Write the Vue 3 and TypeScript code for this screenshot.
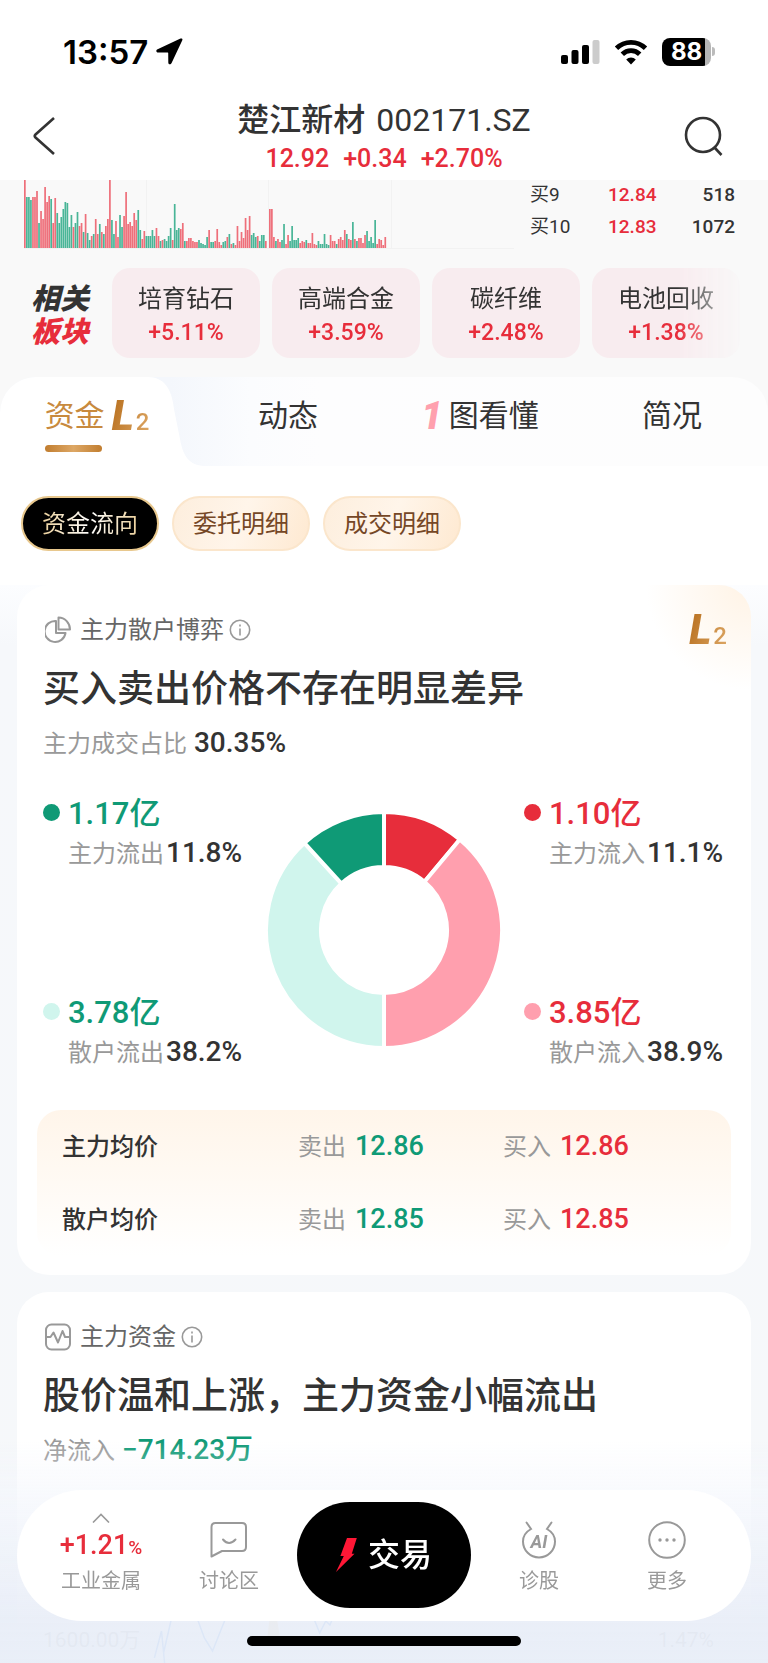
<script setup lang="ts">
interface Bar { x: number; h: number; up: boolean }

// Minute volumes: "r" rising, "g" falling, followed by the bar height.
const morning =
  'r68 g51 g51 g48 r51 r51 r57 g25 r37 r29 r61 r46 r52 g49 r25 r50 g35 g25 g31 g39 g46 g45 g21 g33 r21 g25 g36 r22 r25 g16 r34 g15 g8 r12 g14 r29 r14 g24 r16 g14 r22 r29 r68 g28 g14 r27 r11 g33 g21 r32 r56 r24 r26 r22 r35 r28 g38 g18 r9 r17 g12 g12 g12 g18 g12 r20 r12 g7 r8 g9 g7 g12 g20 r8 g44 g18 g20 r19 r25 g7 r7 r10 r10 r7 r6 r6 g8 g5 g4 g3 g11 r18 g6 g6 r7 r19 r6 r3 g6 g7 r11 g14 r4 g5 r3 r22 r7 r16 r10 r30 r18 r32 g13 g15 g11 r12 g7 g13 g13 r7'
const afternoon =
  'r39 r39 r11 g7 r9 r6 g8 g24 r4 r13 g7 g22 g8 g8 g10 r5 r7 r6 g8 r5 r5 r15 r4 r3 g7 g4 g4 g14 g4 g3 r13 r7 r7 g4 r9 r11 r8 r18 g14 r9 r8 g26 r9 g7 r10 r10 r5 r13 g17 g7 g11 g5 g28 r4 r9 r8 r3 r11'

const toBars = (src: string, start: number): Bar[] =>
  src.split(' ').map((t, i) => ({ x: start + i * 2.025, h: Number(t.slice(1)), up: t[0] === 'r' }))

const bars: Bar[] = [...toBars(morning, 0), ...toBars(afternoon, 245)]

const orders = [
  { label: '买9', price: '12.84', qty: '518' },
  { label: '买10', price: '12.83', qty: '1072' },
]

const sectors = [
  { name: '培育钻石', pct: '+5.11%' },
  { name: '高端合金', pct: '+3.59%' },
  { name: '碳纤维', pct: '+2.48%' },
  { name: '电池回收', pct: '+1.38%' },
]

const flows = [
  { amount: '1.17亿', label: '主力流出', pct: '11.8%', color: '#0f9a76', tone: 'down' },
  { amount: '1.10亿', label: '主力流入', pct: '11.1%', color: '#e72d3b', tone: 'up' },
  { amount: '3.78亿', label: '散户流出', pct: '38.2%', color: '#d0f5ed', tone: 'down' },
  { amount: '3.85亿', label: '散户流入', pct: '38.9%', color: '#ff9fae', tone: 'up' },
]

const ring = [
  { share: 11.1, color: '#e72d3b' },
  { share: 38.9, color: '#ff9fae' },
  { share: 38.2, color: '#d0f5ed' },
  { share: 11.8, color: '#0f9a76' },
]

const R = 118
const r = 63
const point = (radius: number, turn: number) => {
  const a = turn * 2 * Math.PI
  return `${(120 + radius * Math.sin(a)).toFixed(2)} ${(120 - radius * Math.cos(a)).toFixed(2)}`
}
let sum = 0
const slices = ring.map((s) => {
  const a = sum / 100
  sum += s.share
  const b = sum / 100
  return {
    color: s.color,
    d: `M${point(R, a)}A${R} ${R} 0 0 1 ${point(R, b)}L${point(r, b)}A${r} ${r} 0 0 0 ${point(r, a)}Z`,
  }
})

const averages = [
  { who: '主力均价', sell: '12.86', buy: '12.86' },
  { who: '散户均价', sell: '12.85', buy: '12.85' },
]
</script>

<template>
  <div class="screen">
    <div class="status">
      <span class="time">13:57</span>
      <svg class="arrow" width="27" height="27" viewBox="0 0 27 27"><path d="M24.500.600 1.600 11.200c-2 1-1.600 3.300.6 3.300l9.500.1c.3 0 .5.2.5.5l.1 9.300c0 2.200 2.400 2.700 3.300.7L26.300 2.300C26.900.9 25.900 0 24.500.6Z" /></svg>
      <svg class="signal" width="39" height="26" viewBox="0 0 39 26">
        <rect x="0" y="16" width="7" height="9" rx="2" /><rect x="10.500" y="11" width="7" height="14" rx="2" />
        <rect x="21" y="6" width="7" height="19" rx="2" /><rect x="31.500" y="1" width="7" height="24" rx="2" fill="#ccc" />
      </svg>
      <svg class="wifi" width="34" height="26" viewBox="0 0 34 26" fill="none" stroke="#000" stroke-width="4.800">
        <path d="M2.500 9.300a20.500 20.500 0 0 1 29 0" /><path d="M8.300 15.300a12.300 12.300 0 0 1 17.400 0" />
        <path d="M17 25.500l-4.800-5a6.800 6.800 0 0 1 9.600 0Z" fill="#000" stroke="none" />
      </svg>
      <span class="battery"><b>88</b></span><i class="cap"></i>
    </div>

    <header class="head">
      <button class="icon-btn left" aria-label="返回">
        <svg width="22" height="38" viewBox="0 0 22 38" fill="none" stroke="#333" stroke-width="2.600"><path d="M21 1 2.500 17.500q-1.500 1.500 0 3L21 37" /></svg>
      </button>
      <div class="stock">
        <h1>楚江新材 <span>002171.SZ</span></h1>
        <p class="quote"><span>12.92</span><span>+0.34</span><span>+2.70%</span></p>
      </div>
      <button class="icon-btn right" aria-label="搜索">
        <svg width="40" height="40" viewBox="0 0 40 40" fill="none" stroke="#333" stroke-width="2.600"><circle cx="19" cy="19" r="17" /><path d="m30.500 31.500 7 7.500" /></svg>
      </button>
    </header>

    <section class="market">
      <div class="depth">
        <svg class="volume" viewBox="0 0 490 69" aria-hidden="true">
          <path d="M122.500 0V68.500M244.500 0V68.500M367.500 0V68.500M0 68.500H490" stroke="#f2f2f2" fill="none" />
          <rect v-for="(b, i) in bars" :key="i" :x="b.x" :y="68 - b.h" width="1.700" :height="b.h" :fill="b.up ? '#ee6f7a' : '#49b597'" />
        </svg>
        <ul class="orders">
          <li v-for="o in orders" :key="o.label"><span>{{ o.label }}</span><b class="up">{{ o.price }}</b><b>{{ o.qty }}</b></li>
        </ul>
      </div>
      <div class="sectors">
        <h2><span>相关</span><span class="up">板块</span></h2>
        <div class="sector-list">
          <a v-for="s in sectors" :key="s.name" href="#" class="sector"><span>{{ s.name }}</span><b>{{ s.pct }}</b></a>
        </div>
      </div>
    </section>

    <main class="panel">
      <nav class="tabs">
        <button class="tab active">
          <svg class="shape" width="204" height="89" viewBox="0 0 204 89"><path fill="#fff" d="M0 0H148C164 0 172 12 174 32L180 62C183 80 190 88 204 89H0Z" /></svg>
          <span class="tab-text">资金</span><span class="level"><i>L</i><small>2</small></span>
        </button>
        <button class="tab">动态</button>
        <button class="tab"><i class="one">1</i>图看懂</button>
        <button class="tab">简况</button>
      </nav>

      <div class="pills">
        <button class="pill on"><span>资金流向</span></button>
        <button class="pill">委托明细</button>
        <button class="pill">成交明细</button>
      </div>

      <div class="cards">
        <article class="card battle">
          <div class="card-head">
            <svg width="26" height="28" viewBox="0 0 26 28" fill="none" stroke="#999" stroke-width="2">
              <path d="M11 5A10.500 10.500 0 1 0 20.500 17H11Z" stroke-linejoin="round" /><path d="M13.500 1.500V13.500H25C25 7 20 1.500 13.500 1.500Z" stroke-linejoin="round" />
            </svg>
            <span>主力散户博弈</span>
            <svg class="info" width="22" height="22" viewBox="0 0 22 22" fill="none" stroke="#999" stroke-width="1.600"><circle cx="11" cy="11" r="9.700" /><path d="M11 9.500v7M11 5.500v2" /></svg>
            <span class="level end"><i>L</i><small>2</small></span>
          </div>
          <h3>买入卖出价格不存在明显差异</h3>
          <p class="sub">主力成交占比 <b>30.35%</b></p>

          <div class="split">
            <dl v-for="f in flows" :key="f.label" class="flow">
              <dt :class="f.tone"><i :style="{ background: f.color }"></i>{{ f.amount }}</dt>
              <dd>{{ f.label }}<b>{{ f.pct }}</b></dd>
            </dl>
            <svg class="donut" width="240" height="240" viewBox="0 0 240 240">
              <path v-for="s in slices" :key="s.color" :d="s.d" :fill="s.color" stroke="#fff" stroke-width="4" />
            </svg>
          </div>

          <table class="averages">
            <tbody>
              <tr v-for="a in averages" :key="a.who">
                <th scope="row">{{ a.who }}</th>
                <td><span>卖出</span><b class="down">{{ a.sell }}</b></td>
                <td><span>买入</span><b class="up">{{ a.buy }}</b></td>
              </tr>
            </tbody>
          </table>
        </article>

        <article class="card funds">
          <div class="card-head">
            <svg width="26" height="28" viewBox="0 0 26 28" fill="none" stroke="#999" stroke-width="2" stroke-linejoin="round"><rect x="1" y="1.500" width="24" height="25" rx="5.500" /><path d="M2 14h3.500l3-4.500 4.500 10L17.500 8l2.500 6h4" /></svg>
            <span>主力资金</span>
            <svg class="info" width="22" height="22" viewBox="0 0 22 22" fill="none" stroke="#999" stroke-width="1.600"><circle cx="11" cy="11" r="9.700" /><path d="M11 9.500v7M11 5.500v2" /></svg>
          </div>
          <h3>股价温和上涨，主力资金小幅流出</h3>
          <p class="sub">净流入 <b class="down">−714.23万</b></p>
          <div class="trend">
            <svg viewBox="0 0 680 170" preserveAspectRatio="none" aria-hidden="true">
              <path d="M231 100 225 150h14Z" fill="#f3d9b0" />
              <path d="M115 165 122 138 125 170M124 160 133 120M155 120 164 145 172 158 181 135 187 120M269 120 277 140 283 128 287 132 292 120" fill="none" stroke="#6ea6f2" stroke-width="1.500" />
            </svg>
            <div class="axis"><span>1600.00万</span><span>1.47%</span></div>
          </div>
        </article>
      </div>
    </main>

    <footer class="dock">
      <nav class="bar">
        <button class="item">
          <svg class="caret" width="18" height="10" viewBox="0 0 18 10" fill="none" stroke="#999" stroke-width="1.600"><path d="m1 9.500 8-8 8 8" /></svg>
          <b class="index up">+1.21<small>%</small></b>
          <span>工业金属</span>
        </button>
        <button class="item">
          <svg width="38" height="38" viewBox="0 0 38 38" fill="none" stroke="#999" stroke-width="2" stroke-linejoin="round" stroke-linecap="round"><path d="M1.500 6q0-4 4-4H32q4 0 4 4V26q0 4-4 4H12L1.500 35.500Z" /><path d="M13 18.500q6 7 12.500 0" /></svg>
          <span>讨论区</span>
        </button>
        <button class="trade">
          <svg width="22" height="34" viewBox="0 0 22 34" fill="#ff1736"><path d="M11 0H20.800L15.800 15.800H18.500L0 34 7.800 18H4.400Z" /></svg>
          交易
        </button>
        <button class="item">
          <svg width="38" height="38" viewBox="0 0 38 38" fill="none" stroke="#999" stroke-width="2" stroke-linecap="round"><path d="M6.500 1.500 11 8Q3 12.500 3 20.500a16 16 0 0 0 32 0Q35 12.500 27 8l4.500-6.500" /><text x="19" y="27" class="ai" text-anchor="middle">AI</text></svg>
          <span>诊股</span>
        </button>
        <button class="item">
          <svg width="38" height="38" viewBox="0 0 38 38" fill="none" stroke="#999" stroke-width="2"><circle cx="19" cy="19" r="17.800" /><g fill="#999" stroke="none"><circle cx="12" cy="19" r="1.700" /><circle cx="19" cy="19" r="1.700" /><circle cx="26" cy="19" r="1.700" /></g></svg>
          <span>更多</span>
        </button>
      </nav>
      <div class="home"></div>
    </footer>
  </div>
</template>

<style>
body { margin: 0; background: #fff; }
</style>

<style scoped>
* { box-sizing: border-box; }
.screen { display: flex; flex-direction: column; min-height: 100vh; color: #333; font-family: Roboto, "Noto Sans CJK SC", sans-serif; background: #fff; overflow: hidden; }
h1, h2, h3, p, ul, dl, dd { margin: 0; padding: 0; }
svg { display: block; flex: none; }
button { border: 0; padding: 0; background: none; color: inherit; font: inherit; }
a { color: inherit; text-decoration: none; }
b { font-weight: 500; }
.up { color: #e72d3b; }
.down { color: #0f9a76; }

.status { display: flex; align-items: center; height: 100px; padding: 3px 53px 0 63px; }
.time { font: 600 33px/40px Inter, sans-serif; color: #000; }
.arrow { margin-left: 8px; }
.signal { margin-left: auto; }
.wifi { margin: 0 14px 0 14px; }
.battery { display: flex; align-items: center; justify-content: center; width: 49px; height: 28px; border-radius: 8px; background: linear-gradient(90deg, #000 88%, #b5b5b5 88%); }
.battery b { font: 700 24px/28px Inter, sans-serif; color: #fff; }
.cap { width: 3px; height: 9px; margin-left: 1px; border-radius: 0 4px 4px 0; background: #bbb; }

.head { display: flex; align-items: center; height: 80px; padding: 0 44px 0 33px; }
.icon-btn { display: flex; width: 72px; margin-bottom: 8px; }
.icon-btn.left { width: 83px; }
.icon-btn.right { justify-content: flex-end; }
.stock { flex: 1; text-align: center; }
h1 { font-weight: 500; font-size: 32px; line-height: 38px; }
h1 span { margin-left: 3px; font-weight: 400; }
.quote { display: flex; justify-content: center; gap: 14px; font-weight: 500; font-size: 25px; line-height: 40px; color: #e72d3b; }

.market { background: #f9f9f9; height: 197px; }
.depth { display: flex; justify-content: space-between; padding: 0 33px 0 24px; }
.volume { width: 490px; height: 69px; flex: 0 1 490px; }
.orders { list-style: none; width: 205px; display: grid; gap: 4px; align-content: start; padding-top: 1px; }
.orders li { display: grid; grid-template-columns: 78px 1fr auto; line-height: 28px; font-size: 19px; }
.sectors { display: flex; padding: 19px 0 19px 31px; }
.sectors h2 { flex: none; width: 81px; padding-top: 15px; font-size: 29px; font-weight: 900; font-style: italic; line-height: 33px; }
.sectors h2 span { display: block; }
.sector-list { display: flex; gap: 12px; flex: 1; min-width: 0; overflow: hidden; -webkit-mask-image: linear-gradient(90deg, #000 calc(100% - 90px), transparent calc(100% - 20px)); mask-image: linear-gradient(90deg, #000 calc(100% - 90px), transparent calc(100% - 20px)); }
.sector { flex: none; width: 148px; height: 90px; padding-top: 14px; border-radius: 18px; background: #f8ecef; text-align: center; }
.sector span, .sector b { display: block; font-size: 24px; line-height: 34px; }
.sector b { font-size: 23px; color: #e72d3b; }

.panel { position: relative; flex: 1; display: flex; flex-direction: column; background: linear-gradient(#f9f9f9 80px, #fff 80px); }
.tabs { display: grid; grid-template-columns: repeat(4, 1fr); height: 89px; border-radius: 36px 36px 0 0; background: linear-gradient(90deg, #f4f7fc 170px, #fbfcfe 250px, #fdfdfe 320px, #fdfdfd); overflow: hidden; }
.tab { position: relative; display: flex; align-items: center; justify-content: center; height: 78px; font-size: 30px; line-height: 40px; }
.tab.active { color: #c88a3e; padding-left: 2px; }
.shape { position: absolute; left: 0; top: 0; }
.tab-text, .level { position: relative; }
.tab-text::after { content: ""; position: absolute; left: 0; bottom: -16px; width: 57px; height: 7px; border-radius: 4px; background: linear-gradient(90deg, #c17d2f, #dda765, #c17d2f); }
.level { display: flex; align-items: baseline; margin-left: 5px; height: 40px; line-height: 40px; background: linear-gradient(110deg, #bd7728 20%, #dda765); -webkit-background-clip: text; background-clip: text; color: transparent; }
.level i { font-size: 42px; font-weight: 900; padding: 0 2px; }
.level small { font-size: 24px; font-weight: 500; }
.one { margin-right: 6px; font-size: 38px; font-weight: 900; color: #ffa0ae; }

.pills { display: flex; gap: 13px; padding: 30px 21px 34px; background: #fff; }
.pill { width: 138px; height: 55px; border: 2px solid #fbe6cc; border-radius: 28px; background: linear-gradient(110deg, #fdeedd, #fff5ea 50%, #fee9d1); color: #754726; font-size: 24px; line-height: 34px; }
.pill.on { background: #000; border-color: #e8c88e; }
.pill.on span { background: linear-gradient(90deg, #ecd19d, #fff 50%, #ecd19d); -webkit-background-clip: text; background-clip: text; color: transparent; }

.cards { flex: 1; display: flex; flex-direction: column; gap: 17px; padding: 0 17px; background: linear-gradient(#fcfdff, #f6f8fb 60px, #f6f8fa); }
.card { border-radius: 32px; background: #fff; padding: 27px 20px 19px; }
.battle { background: radial-gradient(circle at 100% 0, #fff3e5, #fff 105px); }
.card-head { display: flex; align-items: center; height: 36px; padding: 0 4px 0 8px; font-size: 24px; line-height: 36px; color: #666; }
.card-head > span:not(.level) { margin-left: 9px; }
.info { margin-left: 5px; }
.level.end { margin-left: auto; }
h3 { padding: 17px 6px 0; font-size: 37px; font-weight: 500; line-height: 50px; }
.sub { padding: 10px 6px 0; font-size: 24px; line-height: 36px; color: #999; }
.sub b { margin-left: 1px; font-size: 28px; }
.sub b:not(.down) { color: #333; }

.split { position: relative; display: grid; grid-template-columns: 1fr 207px; row-gap: 120px; padding: 32px 0 38px 6px; }
.flow dt { display: flex; align-items: center; font-size: 31px; font-weight: 500; line-height: 40px; }
.flow dt i { width: 17px; height: 17px; margin: 0 8px 4px 0; border-radius: 50%; }
.flow dd { padding-left: 25px; font-size: 24px; line-height: 38px; color: #999; white-space: nowrap; }
.flow dd b { margin-left: 2px; font-size: 28px; color: #333; }
.donut { position: absolute; left: calc(50% - 120px); top: 48px; }

.averages { width: 100%; border-collapse: separate; border-spacing: 0; table-layout: fixed; border-radius: 24px; background: linear-gradient(#fff5ea, #fffaf4 50%, #fff); font-size: 24px; }
.averages tr { height: 73px; }
.averages th, .averages td { padding: 0; text-align: left; line-height: 36px; }
.averages th { width: 261px; padding-left: 25px; font-weight: 500; }
.averages td:nth-child(2) { width: 205px; }
.averages td span { color: #999; }
.averages td b { margin-left: 9px; font-size: 27px; }

.funds { flex: 1; display: flex; flex-direction: column; border-radius: 32px 32px 0 0; padding-bottom: 0; }
.trend { position: relative; flex: 1; min-height: 180px; display: flex; align-items: flex-end; }
.trend svg { position: absolute; left: 0; bottom: 0; width: 100%; height: 170px; }
.axis { display: flex; flex: 1; justify-content: space-between; padding: 0 17px 9px 6px; font-size: 21px; line-height: 28px; color: #bbb; }

.dock { position: fixed; left: 0; right: 0; bottom: 0; padding: 50px 17px 17px; background: linear-gradient(rgba(245, 248, 252, 0), rgba(243, 246, 252, .7) 30%, rgba(232, 237, 247, .9) 80%, rgba(231, 237, 247, .92)); }
.bar { display: grid; grid-template-columns: 1fr 1fr 182px 1fr 1fr; align-items: stretch; height: 131px; padding: 12px 20px 13px; border-radius: 66px; background: #fff; }
.item { display: flex; flex-direction: column; align-items: center; justify-content: flex-end; padding-bottom: 11px; color: #999; font-size: 20px; line-height: 32px; }
.item svg { margin-bottom: 6px; }
.item .caret { margin-bottom: 5px; }
.item .index { font-size: 27px; line-height: 34px; }
.index small { font-size: 19px; font-weight: 500; }
.trade { display: flex; align-items: center; justify-content: center; gap: 10px; margin: 0 4px; border-radius: 53px; background: #000; color: #fff; font-size: 32px; font-weight: 500; line-height: 40px; }
.ai { font: italic 700 18px Roboto, sans-serif; fill: #999; stroke: none; }
.home { width: 274px; height: 10px; margin: 15px auto 0; border-radius: 5px; background: #000; }
</style>
